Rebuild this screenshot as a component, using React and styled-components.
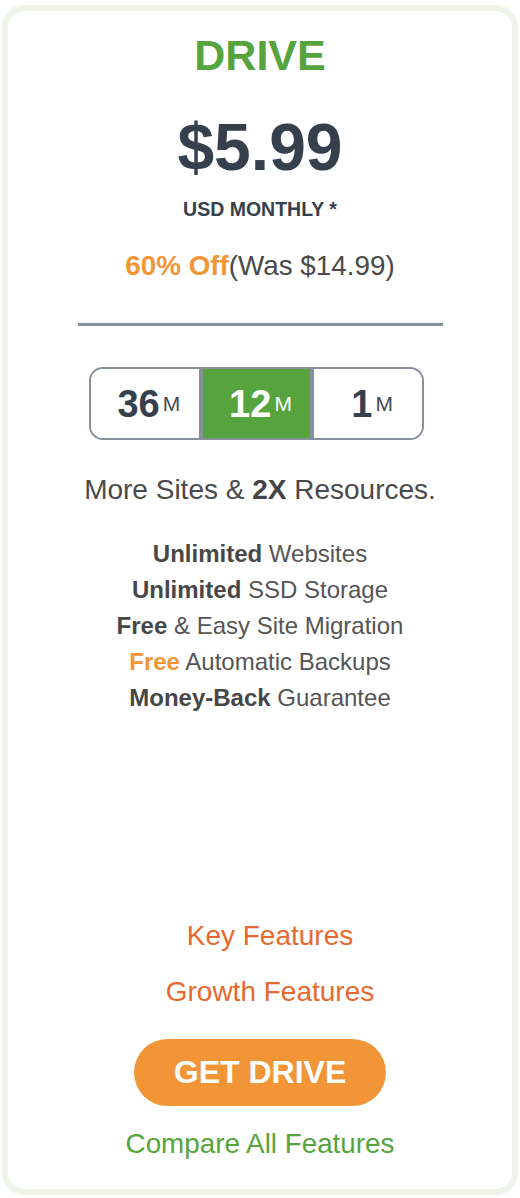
import styled, { createGlobalStyle } from 'styled-components';

const GlobalStyle = createGlobalStyle`
  html, body {
    margin: 0;
    padding: 0;
    background: #ffffff;
  }
  body {
    font-family: "Liberation Sans", Arial, Helvetica, sans-serif;
  }
  * {
    box-sizing: border-box;
  }
`;

const Page = styled.div`
  padding: 5px 2px 3px 2px;
`;

const Card = styled.div`
  display: flex;
  flex-direction: column;
  align-items: center;
  height: 1190px;
  padding: 19px 0 28px;
  background: #ffffff;
  border: 6px solid #eef4e9;
  border-radius: 22px;
`;

const PlanName = styled.h2`
  margin: 0;
  font-size: 43px;
  line-height: 50px;
  font-weight: 700;
  color: #56a43d;
`;

const Price = styled.div`
  margin-top: 29px;
  font-size: 66px;
  line-height: 76px;
  font-weight: 700;
  color: #363f4c;
`;

const Period = styled.div`
  margin-top: 12px;
  font-size: 19.5px;
  line-height: 24px;
  font-weight: 700;
  color: #363f4c;
`;

const Discount = styled.div`
  margin-top: 28px;
  font-size: 27.8px;
  line-height: 34px;
  color: #4a4a4a;

  strong {
    font-weight: 700;
    color: #f29536;
  }
`;

const Divider = styled.hr`
  margin: 40px 0 0;
  width: 365px;
  height: 3px;
  border: 0;
  background: #868f9a;
`;

const Toggle = styled.div`
  display: flex;
  margin-top: 41px;
  margin-right: 7px;
  width: 335px;
  height: 73px;
  border: 2px solid #868f9a;
  border-radius: 14px;
  overflow: hidden;
`;

const Term = styled.button`
  display: flex;
  flex: 1;
  align-items: center;
  justify-content: center;
  gap: 3px;
  padding: 0 0 0 8px;
  border: 0;
  border-left: ${({ $first }) => ($first ? '0' : '4px solid #868f9a')};
  background: ${({ $active }) => ($active ? '#56a43d' : '#ffffff')};
  font-family: inherit;
  cursor: pointer;
`;

const TermNumber = styled.span`
  font-size: 38px;
  line-height: 38px;
  font-weight: 700;
  color: ${({ $active }) => ($active ? '#ffffff' : '#363f4c')};
`;

const TermUnit = styled.span`
  font-size: 21px;
  line-height: 38px;
  color: ${({ $active }) => ($active ? '#ffffff' : '#444a52')};
`;

const Tagline = styled.p`
  margin: 33px 0 0;
  font-size: 28px;
  line-height: 34px;
  color: #4a4a4a;

  strong {
    color: #444444;
  }
`;

const FeatureList = styled.ul`
  margin: 29px 0 0;
  padding: 0;
  list-style: none;
  text-align: center;
`;

const Feature = styled.li`
  font-size: 24px;
  line-height: 36px;
  color: #555555;

  strong {
    font-weight: 700;
    color: ${({ $accent }) => ($accent ? '#f29536' : '#474747')};
  }
`;

const Footer = styled.div`
  display: flex;
  flex-direction: column;
  align-items: center;
  margin-top: auto;
`;

const FeatureLink = styled.a`
  margin-top: ${({ $spaced }) => ($spaced ? '22px' : '0')};
  padding-left: 20px;
  font-size: 28px;
  line-height: 34px;
  color: #e8692f;
  text-decoration: none;
`;

const CtaButton = styled.button`
  margin-top: 30px;
  width: 252px;
  height: 67px;
  border: 0;
  border-radius: 34px;
  background: #f29536;
  font-family: inherit;
  font-size: 32px;
  font-weight: 700;
  color: #ffffff;
  cursor: pointer;
`;

const CompareLink = styled.a`
  margin-top: 21px;
  font-size: 27.8px;
  line-height: 34px;
  color: #56a43d;
  text-decoration: none;
`;

const terms = [
  { value: '36', active: false },
  { value: '12', active: true },
  { value: '1', active: false },
];

const features = [
  { bold: 'Unlimited', rest: ' Websites' },
  { bold: 'Unlimited', rest: ' SSD Storage' },
  { bold: 'Free', rest: ' & Easy Site Migration' },
  { bold: 'Free', rest: ' Automatic Backups', accent: true },
  { bold: 'Money-Back', rest: ' Guarantee' },
];

export default function App() {
  return (
    <Page>
      <GlobalStyle />
      <Card>
        <PlanName>DRIVE</PlanName>
        <Price>$5.99</Price>
        <Period>USD MONTHLY *</Period>
        <Discount>
          <strong>60% Off</strong>(Was $14.99)
        </Discount>
        <Divider />
        <Toggle>
          {terms.map((t, i) => (
            <Term key={t.value} $first={i === 0} $active={t.active}>
              <TermNumber $active={t.active}>{t.value}</TermNumber>
              <TermUnit $active={t.active}>M</TermUnit>
            </Term>
          ))}
        </Toggle>
        <Tagline>
          More Sites &amp; <strong>2X</strong> Resources.
        </Tagline>
        <FeatureList>
          {features.map((f, i) => (
            <Feature key={i} $accent={f.accent}>
              <strong>{f.bold}</strong>
              {f.rest}
            </Feature>
          ))}
        </FeatureList>
        <Footer>
          <FeatureLink href="#">Key Features</FeatureLink>
          <FeatureLink href="#" $spaced>Growth Features</FeatureLink>
          <CtaButton>GET DRIVE</CtaButton>
          <CompareLink href="#">Compare All Features</CompareLink>
        </Footer>
      </Card>
    </Page>
  );
}
